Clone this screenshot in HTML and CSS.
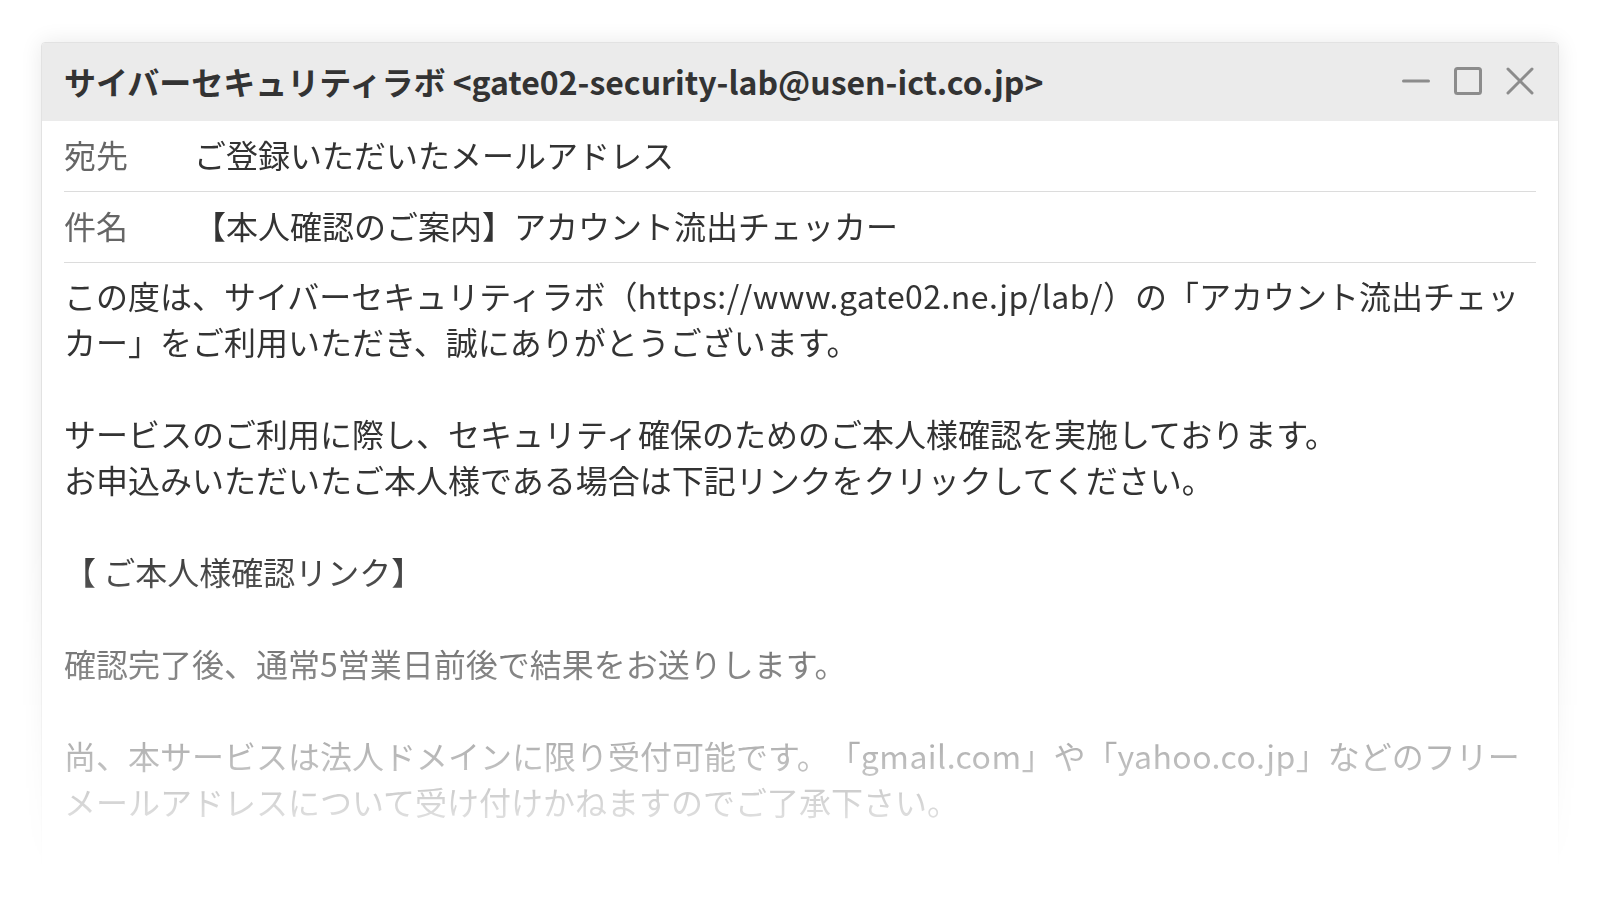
FILE: index.html
```
<!DOCTYPE html>
<html lang="ja">
<head>
<meta charset="UTF-8">
<title>アカウント流出チェッカー - メール</title>
<link rel="stylesheet" href="styles.css">
</head>
<body>
<div class="stage">
    <div class="mailWindow">
        <div class="mailTitle">
            <div class="mailFrom">サイバーセキュリティラボ &lt;gate02-security-lab@usen-ict.co.jp&gt;</div>
            <div class="windowControls">
                <svg viewBox="0 0 28 28" width="28" height="28"><line x1="1.5" y1="14" x2="26.5" y2="14"/></svg>
                <svg viewBox="0 0 28 28" width="28" height="28"><rect x="1.5" y="1.5" width="25" height="25" rx="2"/></svg>
                <svg viewBox="0 0 28 28" width="28" height="28"><line x1="2" y1="2" x2="26" y2="26"/><line x1="26" y1="2" x2="2" y2="26"/></svg>
            </div>
        </div>
        <div class="mailContent">
            <div class="mailRow">
                <span class="mailLabel">宛先</span>
                <span class="mailValue">ご登録いただいたメールアドレス</span>
            </div>
            <div class="mailRow">
                <span class="mailLabel">件名</span>
                <span class="mailValue">【本人確認のご案内】アカウント流出チェッカー</span>
            </div>
            <div class="mailBody">
                <p>この度は、サイバーセキュリティラボ（<span class="latin">https://www.gate02.ne.jp/lab/</span>）の「アカウント流出チェッカー」をご利用いただき、誠にありがとうございます。</p>
                <p>サービスのご利用に際し、セキュリティ確保のためのご本人様確認を実施しております。<br>お申込みいただいたご本人様である場合は下記リンクをクリックしてください。</p>
                <p>【 ご本人様確認リンク】</p>
                <p>確認完了後、通常5営業日前後で結果をお送りします。</p>
                <p>尚、本サービスは法人ドメインに限り受付可能です。「<span class="latin">gmail.com</span>」や「<span class="latin">yahoo.co.jp</span>」などのフリーメールアドレスについて受け付けかねますのでご了承下さい。</p>
            </div>
        </div>
    </div>
</div>
</body>
</html>
```

FILE: styles.css
```
body {
    font-family: "Noto Sans CJK JP", "Noto Sans", sans-serif;
    background-color: #fff;
    color: #333;
    margin: 0;
    padding: 0;
    text-spacing-trim: space-all;
}
.stage {
    height: 900px;
    padding: 42px 41px 0 41px;
    box-sizing: border-box;
    overflow: hidden;
    -webkit-mask-image: linear-gradient(to bottom, #000 540px, transparent 870px);
    mask-image: linear-gradient(to bottom, #000 540px, transparent 870px);
}
.mailWindow {
    height: 860px;
    background-color: #fff;
    border: 1px solid #e2e2e2;
    border-radius: 4px;
    box-shadow: 0 0 22px rgba(0, 0, 0, 0.09);
    overflow: hidden;
}
.mailTitle {
    display: flex;
    align-items: center;
    justify-content: space-between;
    height: 78px;
    padding: 0 24px 3px 22px;
    box-sizing: border-box;
    background-color: #ebebeb;
}
.mailFrom {
    font-size: 32px;
    font-weight: 700;
    color: #333;
}
.windowControls {
    display: flex;
    gap: 24px;
}
.windowControls svg {
    fill: none;
    stroke: #8c8c8c;
    stroke-width: 3;
    stroke-linecap: round;
}
.mailContent {
    padding: 0 22px;
    font-size: 32px;
    line-height: 46px;
}
.mailRow {
    display: flex;
    padding: 10px 0 14px 0;
    border-bottom: 1px solid #dcdcdc;
}
.mailLabel {
    width: 130px;
    flex-shrink: 0;
    color: #666;
}
.mailValue {
    color: #333;
}
.mailBody {
    padding-top: 9px;
}
.mailBody p {
    margin: 0 0 46px 0;
}
.mailBody .latin {
    letter-spacing: 0.45px;
}
```
